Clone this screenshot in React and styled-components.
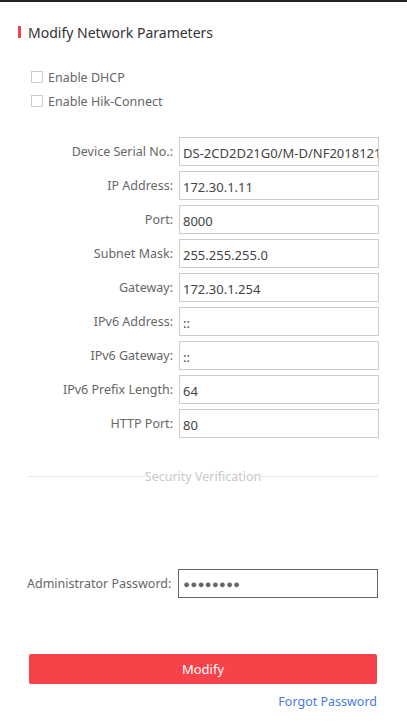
import React from 'react'
import styled, { createGlobalStyle } from 'styled-components'

const GlobalStyle = createGlobalStyle`
  html, body {
    margin: 0;
    padding: 0;
    background: #fff;
  }
  body {
    font-family: "Noto Sans", "Open Sans", Arial, sans-serif;
    color: #333;
  }
`

const Page = styled.div`
  width: 407px;
  height: 722px;
  box-sizing: border-box;
  border-top: 2px solid #1f2227;
  overflow: hidden;
`

const Header = styled.div`
  display: flex;
  align-items: center;
  gap: 7px;
  margin: 21px 0 0 18px;
  height: 18px;
  font-size: 14px;
  color: #333;
`

const RedMark = styled.span`
  display: block;
  width: 3px;
  height: 12px;
  background: #f5424a;
`

const Options = styled.div`
  display: flex;
  flex-direction: column;
  margin: 24px 0 0 31px;
`

const Option = styled.label`
  display: flex;
  align-items: center;
  gap: 5px;
  height: 24px;
  font-size: 12.5px;
  color: #666;
`

const Box = styled.span`
  display: block;
  width: 10px;
  height: 10px;
  border: 1px solid #ccc;
  background: #fff;
`

const Fields = styled.div`
  display: grid;
  grid-template-columns: 173px 200px;
  column-gap: 6px;
  row-gap: 5px;
  margin-top: 24px;
`

const Label = styled.div`
  display: flex;
  align-items: center;
  justify-content: flex-end;
  font-size: 12.5px;
  color: #666;
`

const Input = styled.div`
  box-sizing: border-box;
  width: ${p => p.$width || 'auto'};
  height: 29px;
  border: 1px solid ${p => (p.$dark ? '#666' : '#ccc')};
  padding: ${p => (p.$dots ? '0 0 0 4px' : '2px 0 0 3px')};
  display: flex;
  align-items: center;
  font-size: 13px;
  color: #444;
  white-space: nowrap;
  overflow: hidden;
`

const Divider = styled.div`
  display: flex;
  align-items: center;
  margin: 30px 29px 0 28px;
  font-size: 12.5px;
  color: #c8c8c8;
  &::before, &::after {
    content: '';
    flex: 1;
    height: 1px;
    background: #e6e6e6;
  }
`

const PasswordRow = styled.div`
  display: flex;
  align-items: center;
  gap: 7px;
  margin: 84px 0 0 27px;
`

const PasswordLabel = styled.div`
  font-size: 12.5px;
  color: #666;
`

const Dots = styled.span`
  font-size: 11px;
  letter-spacing: 0.5px;
  color: #666;
`

const Button = styled.button`
  display: block;
  box-sizing: border-box;
  width: 348px;
  height: 30px;
  margin: 56px 0 0 29px;
  border: none;
  border-radius: 2px;
  background: #f8424a;
  color: #fff;
  font-family: inherit;
  font-size: 13px;
`

const Forgot = styled.div`
  width: 377px;
  margin-top: 9px;
  text-align: right;
  font-size: 12.5px;
  color: #4a7be0;
`

const fields = [
  ['Device Serial No.:', 'DS-2CD2D21G0/M-D/NF20181211'],
  ['IP Address:', '172.30.1.11'],
  ['Port:', '8000'],
  ['Subnet Mask:', '255.255.255.0'],
  ['Gateway:', '172.30.1.254'],
  ['IPv6 Address:', '::'],
  ['IPv6 Gateway:', '::'],
  ['IPv6 Prefix Length:', '64'],
  ['HTTP Port:', '80'],
]

export default function App() {
  return (
    <>
      <GlobalStyle />
      <Page>
        <Header>
          <RedMark />
          Modify Network Parameters
        </Header>
        <Options>
          <Option><Box />Enable DHCP</Option>
          <Option><Box />Enable Hik-Connect</Option>
        </Options>
        <Fields>
          {fields.map(([label, value]) => (
            <React.Fragment key={label}>
              <Label>{label}</Label>
              <Input>{value}</Input>
            </React.Fragment>
          ))}
        </Fields>
        <Divider>Security Verification</Divider>
        <PasswordRow>
          <PasswordLabel>Administrator Password:</PasswordLabel>
          <Input $dark $dots $width="200px">
            <Dots>●●●●●●●●</Dots>
          </Input>
        </PasswordRow>
        <Button>Modify</Button>
        <Forgot>Forgot Password</Forgot>
      </Page>
    </>
  )
}
